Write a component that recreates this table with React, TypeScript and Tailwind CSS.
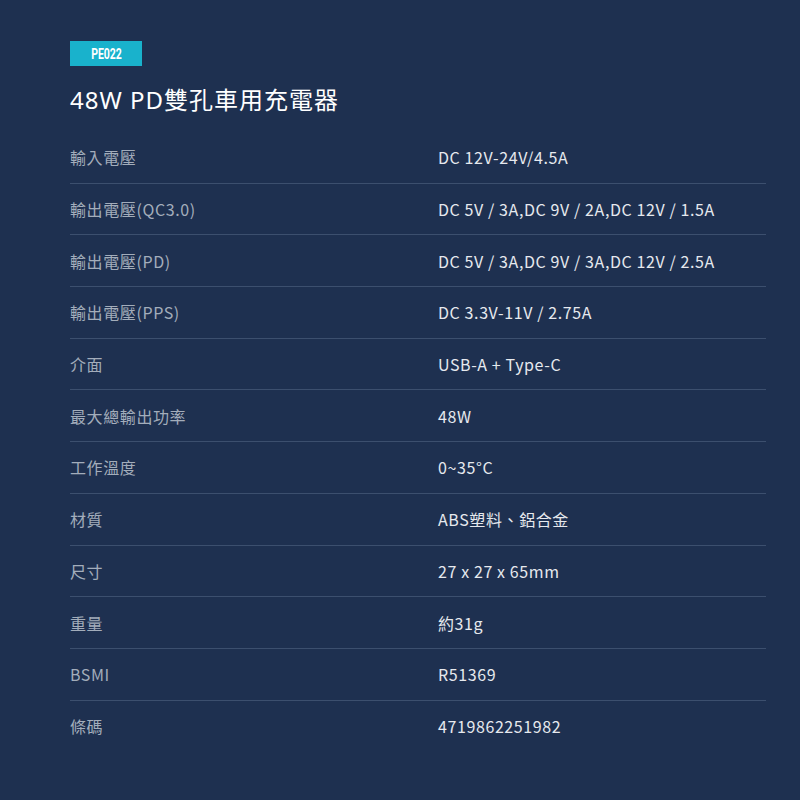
const specs: [string, string][] = [
  ["輸入電壓", "DC 12V-24V/4.5A"],
  ["輸出電壓(QC3.0)", "DC 5V / 3A,DC 9V / 2A,DC 12V / 1.5A"],
  ["輸出電壓(PD)", "DC 5V / 3A,DC 9V / 3A,DC 12V / 2.5A"],
  ["輸出電壓(PPS)", "DC 3.3V-11V / 2.75A"],
  ["介面", "USB-A + Type-C"],
  ["最大總輸出功率", "48W"],
  ["工作溫度", "0~35°C"],
  ["材質", "ABS塑料、鋁合金"],
  ["尺寸", "27 x 27 x 65mm"],
  ["重量", "約31g"],
  ["BSMI", "R51369"],
  ["條碼", "4719862251982"],
];

export default function App() {
  return (
    <div className="min-h-[800px] w-[800px] bg-[#1e3050] px-[70px] pt-[41px] font-['Noto_Sans_CJK_TC','Noto_Sans',sans-serif]">
      <div className="flex h-[25px] w-[72px] items-center justify-center bg-[#19b2cc]">
        <span className="font-['Roboto','Liberation_Sans',sans-serif] text-[14px] font-bold leading-none text-white [transform:scaleX(0.75)]">
          PE022
        </span>
      </div>
      <h1 className="mt-[18px] font-['Noto_Sans','Noto_Sans_CJK_TC',sans-serif] text-[24px] font-normal leading-[32px] tracking-[1px] text-white">
        48W PD雙孔車用充電器
      </h1>
      <div className="mt-[16px] w-[696px]">
        {specs.map(([label, value], i) => (
          <div
            key={label}
            className={`flex h-[51.7px] items-center text-[16px] tracking-[0.6px] ${
              i < specs.length - 1 ? "border-b border-[#3c4f6e]" : ""
            }`}
          >
            <div className="w-[368px] text-[#a3adbb]">{label}</div>
            <div className="text-[#e6e9ee]">{value}</div>
          </div>
        ))}
      </div>
    </div>
  );
}
